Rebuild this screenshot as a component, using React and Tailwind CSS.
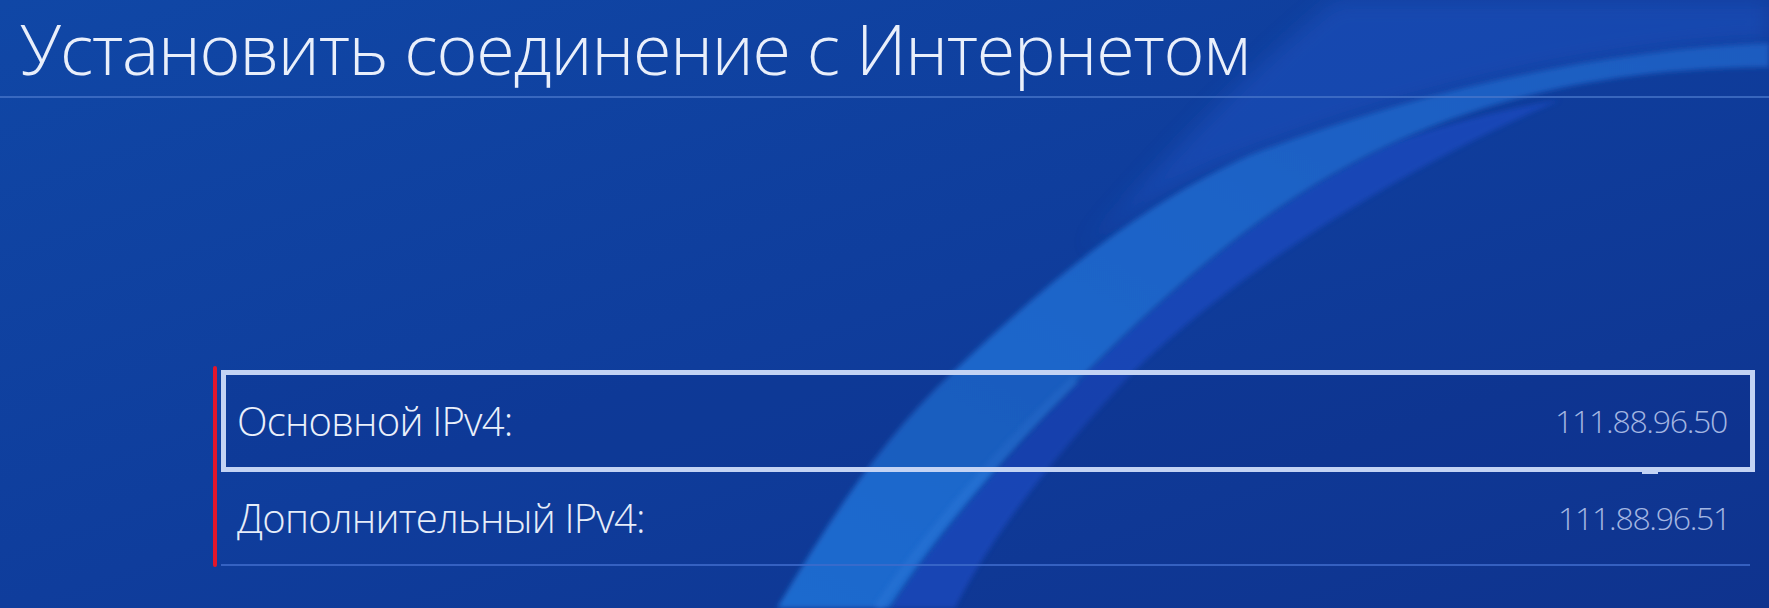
import React from "react";

const rows = [
  { label: "Основной IPv4:", value: "111.88.96.50", selected: true },
  { label: "Дополнительный IPv4:", value: "111.88.96.51", selected: false },
];

function Waves() {
  return (
    <svg
      className="absolute inset-0"
      width="1769"
      height="608"
      viewBox="0 0 1769 608"
    >
      <defs>
        <filter id="soft" x="-20%" y="-20%" width="140%" height="140%">
          <feGaussianBlur stdDeviation="10" />
        </filter>
        <filter id="soft2" x="-20%" y="-20%" width="140%" height="140%">
          <feGaussianBlur stdDeviation="2.5" />
        </filter>
        <linearGradient id="band" x1="0" y1="1" x2="1" y2="0">
          <stop offset="0" stopColor="#1f6ace" />
          <stop offset="0.5" stopColor="#1b64c8" />
          <stop offset="1" stopColor="#1a5cc0" />
        </linearGradient>
      </defs>
      {/* faint sweep above the ribbon */}
      <path
        d="M1335 0 C 1260 60, 1170 150, 1085 250 C 1130 210, 1180 180, 1250 155 C 1420 90, 1600 50, 1769 43 L 1769 0 Z"
        fill="#1b50bc"
        opacity="0.6"
        filter="url(#soft)"
      />
      {/* darker-blue companion strip */}
      <path
        d="M890 608 C 940 530, 1020 440, 1087 372 C 1200 260, 1290 190, 1400 140 C 1460 120, 1510 108, 1560 100 C 1420 160, 1250 260, 1133 372 C 1070 440, 1000 520, 955 608 Z"
        fill="#1a4cc2"
        opacity="0.7"
        filter="url(#soft2)"
      />
      {/* main ribbon */}
      <path
        d="M777 608 C 830 520, 880 440, 953 372 C 1040 290, 1130 210, 1250 155 C 1420 90, 1600 50, 1769 43 L 1769 67 C 1620 68, 1500 95, 1400 140 C 1290 190, 1200 260, 1087 372 C 1020 440, 940 530, 890 608 Z"
        fill="url(#band)"
        filter="url(#soft2)"
      />
      {/* soft highlight on the ribbon's lower edge */}
      <path
        d="M878 608 C 930 530, 1010 440, 1075 380"
        stroke="#2a74d6"
        strokeWidth="8"
        fill="none"
        opacity="0.6"
        filter="url(#soft2)"
      />
    </svg>
  );
}

export default function App() {
  return (
    <div
      className="relative w-[1769px] h-[608px] overflow-hidden bg-gradient-to-br from-[#1047a6] via-[#0f3d9c] to-[#0f338e]"
      style={{ fontFamily: '"Open Sans", "Noto Sans", sans-serif' }}
    >
      <Waves />

      <div className="relative">
        <h1 className="h-[96px] pl-[20px] text-[70px] leading-[96px] font-light text-[#e9effb] tracking-[-0.017em] whitespace-nowrap">
          Установить соединение с Интернетом
        </h1>
        <div className="h-[2px] bg-[#4a78cc]/70" />

        <div className="mt-[272px] ml-[213px] mr-[14px] flex">
          <div className="w-[4px] -mt-[4px] -mb-[1px] rounded-full bg-[#e3162b]" />

          <div className="flex-1 ml-[4px]">
            {rows.map((row) =>
              row.selected ? (
                <div
                  key={row.label}
                  className="relative h-[102px] border-[5px] border-[#c3d3f4] bg-[#0b2a80]/15 flex items-center justify-between pl-[11px] pr-[23px]"
                >
                  <span className="text-[40px] leading-none font-light text-[#eaf0fb] tracking-[-0.02em]">
                    {row.label}
                  </span>
                  <span className="text-[32px] leading-none font-light text-[#a3b6e2] tracking-[-0.04em]">
                    {row.value}
                  </span>
                  <div className="absolute -bottom-[7px] right-[92px] w-[16px] h-[4px] bg-[#c3d3f4]" />
                </div>
              ) : (
                <div
                  key={row.label}
                  className="h-[94px] flex items-center justify-between pl-[16px] pr-[20px] border-b-2 border-[#3f6ccc]/80 mr-[5px]"
                >
                  <span className="text-[40px] leading-none font-light text-[#e6edf9] tracking-[-0.02em]">
                    {row.label}
                  </span>
                  <span className="text-[32px] leading-none font-light text-[#a3b6e2] tracking-[-0.04em]">
                    {row.value}
                  </span>
                </div>
              )
            )}
          </div>
        </div>
      </div>
    </div>
  );
}
